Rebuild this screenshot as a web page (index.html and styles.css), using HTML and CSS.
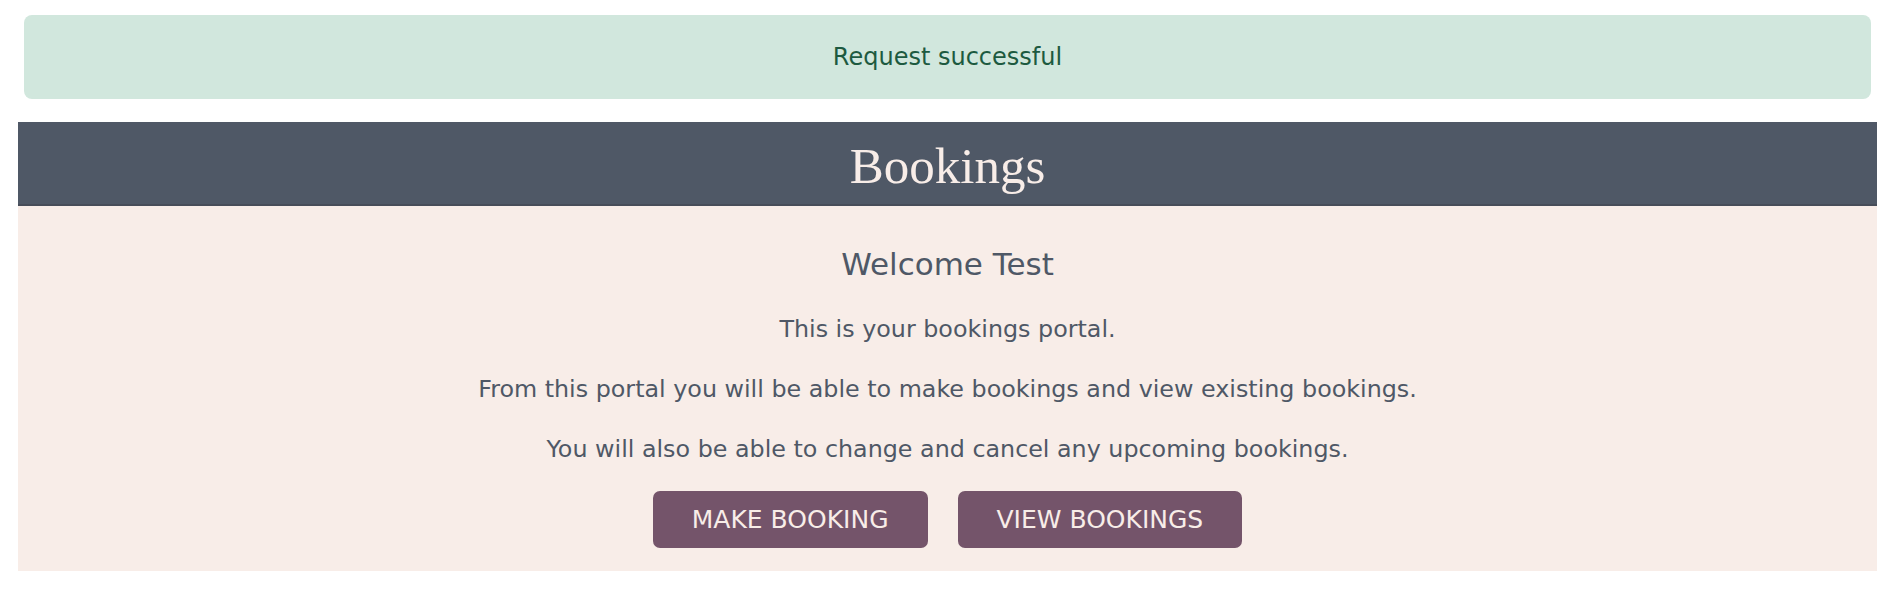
FILE: index.html
```html
<!DOCTYPE html>
<html lang="en">
<head>
<meta charset="utf-8">
<title>Bookings</title>
<link rel="stylesheet" href="styles.css">
</head>
<body>
<div class="page">
  <div class="alert">Request successful</div>
  <header class="banner">
    <h1 class="banner-title">Bookings</h1>
  </header>
  <main class="portal">
    <h2 class="welcome">Welcome Test</h2>
    <p class="copy">This is your bookings portal.</p>
    <p class="copy">From this portal you will be able to make bookings and view existing bookings.</p>
    <p class="copy">You will also be able to change and cancel any upcoming bookings.</p>
    <div class="actions">
      <a class="btn" href="#">MAKE BOOKING</a>
      <a class="btn" href="#">VIEW BOOKINGS</a>
    </div>
  </main>
</div>
</body>
</html>
```
FILE: styles.css
```css
html, body {
  margin: 0;
  padding: 0;
  background: #ffffff;
}

body {
  font-family: "DejaVu Sans", "Noto Sans", sans-serif;
  color: #4f5866;
}

.page {
  padding: 15px 22px 0 18px;
}

.alert {
  margin: 0 6px 23px;
  padding: 24px 16px;
  background: #d1e7dd;
  color: #1d5a40;
  border-radius: 8px;
  text-align: center;
  font-size: 24px;
  line-height: 36px;
}

.banner {
  border-bottom: 2px solid #474d59;
  background: #4f5866;
  display: flex;
  align-items: center;
  justify-content: center;
  padding-top: 7px;
  height: 75px;
}

.banner-title {
  margin: 0;
  font-family: "Liberation Serif", "DejaVu Serif", serif;
  font-weight: 400;
  font-size: 51px;
  line-height: 51px;
  color: #f8ede8;
}

.portal {
  background: #f8ede8;
  padding: 36px 16px 23px;
  text-align: center;
}

.welcome {
  margin: 0 0 24px;
  font-size: 31px;
  line-height: 45px;
  font-weight: 400;
  color: #4f5866;
}

.copy {
  margin: 0 0 24px;
  font-size: 23.8px;
  line-height: 36px;
  color: #4f5866;
}

.actions {
  display: flex;
  justify-content: center;
  gap: 30px;
}

.btn {
  display: flex;
  align-items: center;
  height: 57px;
  padding: 0 39px;
  background: #74546a;
  color: #f8ede8;
  border-radius: 7px;
  text-decoration: none;
  font-size: 25px;
}
```
